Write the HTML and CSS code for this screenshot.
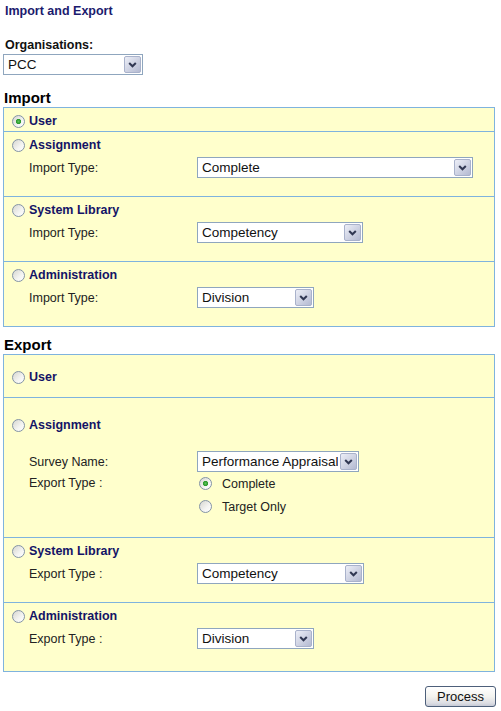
FILE: index.html
```html
<!DOCTYPE html>
<html>
<head>
<meta charset="utf-8">
<title>Import and Export</title>
<link rel="stylesheet" href="styles.css">
</head>
<body>
<div class="page">
  <h1 class="title">Import and Export</h1>
  <div class="org">
    <div class="org-label">Organisations:</div>
    <select class="sel w-org"><option>PCC</option></select>
  </div>

  <h2 class="section-title">Import</h2>
  <div class="box">
    <div class="row row-first">
      <label class="opt"><input type="radio" name="imp" checked><span>User</span></label>
    </div>
    <div class="row">
      <label class="opt"><input type="radio" name="imp"><span>Assignment</span></label>
      <div class="field"><span class="field-label">Import Type:</span><select class="sel w-275"><option>Complete</option></select></div>
    </div>
    <div class="row">
      <label class="opt"><input type="radio" name="imp"><span>System Library</span></label>
      <div class="field"><span class="field-label">Import Type:</span><select class="sel w-165"><option>Competency</option></select></div>
    </div>
    <div class="row">
      <label class="opt"><input type="radio" name="imp"><span>Administration</span></label>
      <div class="field"><span class="field-label">Import Type:</span><select class="sel w-116"><option>Division</option></select></div>
    </div>
  </div>

  <h2 class="section-title export-title">Export</h2>
  <div class="box">
    <div class="row row-user-exp">
      <label class="opt"><input type="radio" name="exp"><span>User</span></label>
    </div>
    <div class="row row-assign-exp">
      <label class="opt"><input type="radio" name="exp"><span>Assignment</span></label>
      <div class="field field-survey"><span class="field-label">Survey Name:</span><select class="sel w-161"><option>Performance Appraisal</option></select></div>
      <div class="field field-radios">
        <span class="field-label">Export Type :</span>
        <div class="choices">
          <label class="choice"><input type="radio" name="exptype" checked><span>Complete</span></label>
          <label class="choice"><input type="radio" name="exptype"><span>Target Only</span></label>
        </div>
      </div>
    </div>
    <div class="row">
      <label class="opt"><input type="radio" name="exp"><span>System Library</span></label>
      <div class="field"><span class="field-label">Export Type :</span><select class="sel w-166"><option>Competency</option></select></div>
    </div>
    <div class="row row-last-exp">
      <label class="opt"><input type="radio" name="exp"><span>Administration</span></label>
      <div class="field"><span class="field-label">Export Type :</span><select class="sel w-116"><option>Division</option></select></div>
    </div>
  </div>

  <div class="actions">
    <button class="btn" type="button">Process</button>
  </div>
</div>
</body>
</html>
```

FILE: styles.css
```css
html, body {
  margin: 0;
  padding: 0;
  background: #ffffff;
}

body {
  font-family: "Liberation Sans", Arial, sans-serif;
  font-size: 12.5px;
  color: #222222;
}

.page {
  padding: 2px 0 0 3px;
  width: 492px;
}

.title {
  margin: 0 0 0 2px;
  font-size: 12.5px;
  line-height: 18px;
  font-weight: bold;
  color: #1b1b6e;
}

.org {
  margin-top: 16px;
}

.org-label {
  margin-left: 2px;
  font-weight: bold;
  line-height: 18px;
  color: #111111;
}

.sel {
  display: block;
  -webkit-appearance: none;
  appearance: none;
  box-sizing: border-box;
  height: 21px;
  margin: 0;
  padding: 0 20px 0 4px;
  border: 1px solid #8fa6be;
  border-radius: 0;
  font-family: "Liberation Sans", Arial, sans-serif;
  font-size: 13.5px;
  color: #111111;
  background: #ffffff url("data:image/svg+xml,%3Csvg xmlns='http://www.w3.org/2000/svg' width='17' height='17'%3E%3Cdefs%3E%3ClinearGradient id='g' x1='0' y1='0' x2='1' y2='1'%3E%3Cstop offset='0' stop-color='%23eef0f8'/%3E%3Cstop offset='1' stop-color='%23b2b8d0'/%3E%3C/linearGradient%3E%3C/defs%3E%3Crect x='0.5' y='0.5' width='16' height='16' rx='1.5' fill='url(%23g)' stroke='%23a9b2cb'/%3E%3Cpath d='M5.2 7l3.3 3.3L11.8 7' fill='none' stroke='%23303752' stroke-width='2'/%3E%3C/svg%3E") no-repeat right 1px center;
}

.w-org { width: 140px; }
.w-275 { width: 276px; }
.w-165 { width: 166px; }
.w-166 { width: 167px; }
.w-161 { width: 162px; }
.w-116 { width: 117px; }

.section-title {
  margin: 14px 0 0 1px;
  font-size: 15px;
  line-height: 18px;
  font-weight: bold;
  color: #000000;
}

.export-title {
  margin-top: 9px;
}

.box {
  border: 1px solid #7fb3de;
  background: #ffffcc;
}

.row {
  padding: 4px 0 18px 8px;
  border-top: 1px solid #7fb3de;
}

.row:first-child {
  border-top: none;
}

.row-first {
  padding-top: 4px;
  padding-bottom: 1px;
}

.row-user-exp {
  padding-top: 13px;
  padding-bottom: 11px;
}

.row-assign-exp {
  padding-top: 18px;
  padding-bottom: 19px;
}

.row-last-exp {
  padding-bottom: 22px;
}

.opt {
  display: flex;
  align-items: center;
  gap: 4px;
  height: 18px;
  font-weight: bold;
  color: #141466;
}

input[type="radio"] {
  -webkit-appearance: none;
  appearance: none;
  box-sizing: border-box;
  width: 13px;
  height: 13px;
  margin: 0;
  border: 1px solid #8393a6;
  border-radius: 50%;
  background: linear-gradient(135deg, #d6d6d0 0%, #f4f4f2 60%, #ffffff 100%);
  flex: none;
}

input[type="radio"]:checked {
  background:
    radial-gradient(circle at 50% 50%, #5cc45c 0, #2a9a2a 2.2px, rgba(42,154,42,0) 3px),
    linear-gradient(135deg, #d6d6d0 0%, #f4f4f2 60%, #ffffff 100%);
}

.field {
  display: flex;
  align-items: center;
  margin-top: 3px;
  padding-left: 17px;
}

.field-label {
  width: 168px;
  flex: none;
  color: #222222;
}

.field-survey {
  margin-top: 17px;
}

.field-radios {
  margin-top: 0;
  align-items: flex-start;
}

.field-radios .field-label {
  line-height: 23px;
}

.choices {
  display: flex;
  flex-direction: column;
}

.choice {
  display: flex;
  align-items: center;
  gap: 10px;
  height: 23px;
  padding-left: 2px;
  color: #222222;
}

.actions {
  display: flex;
  justify-content: flex-end;
  margin-top: 14px;
  margin-right: -1px;
}

.btn {
  box-sizing: border-box;
  width: 71px;
  height: 21px;
  padding: 0;
  border: 1px solid #4d5f7a;
  border-radius: 3px;
  background: linear-gradient(to bottom, #ffffff 0%, #f3f3ef 50%, #dcdde3 85%, #c6cad6 100%);
  font-family: "Liberation Sans", Arial, sans-serif;
  font-size: 13px;
  color: #111111;
}
```
